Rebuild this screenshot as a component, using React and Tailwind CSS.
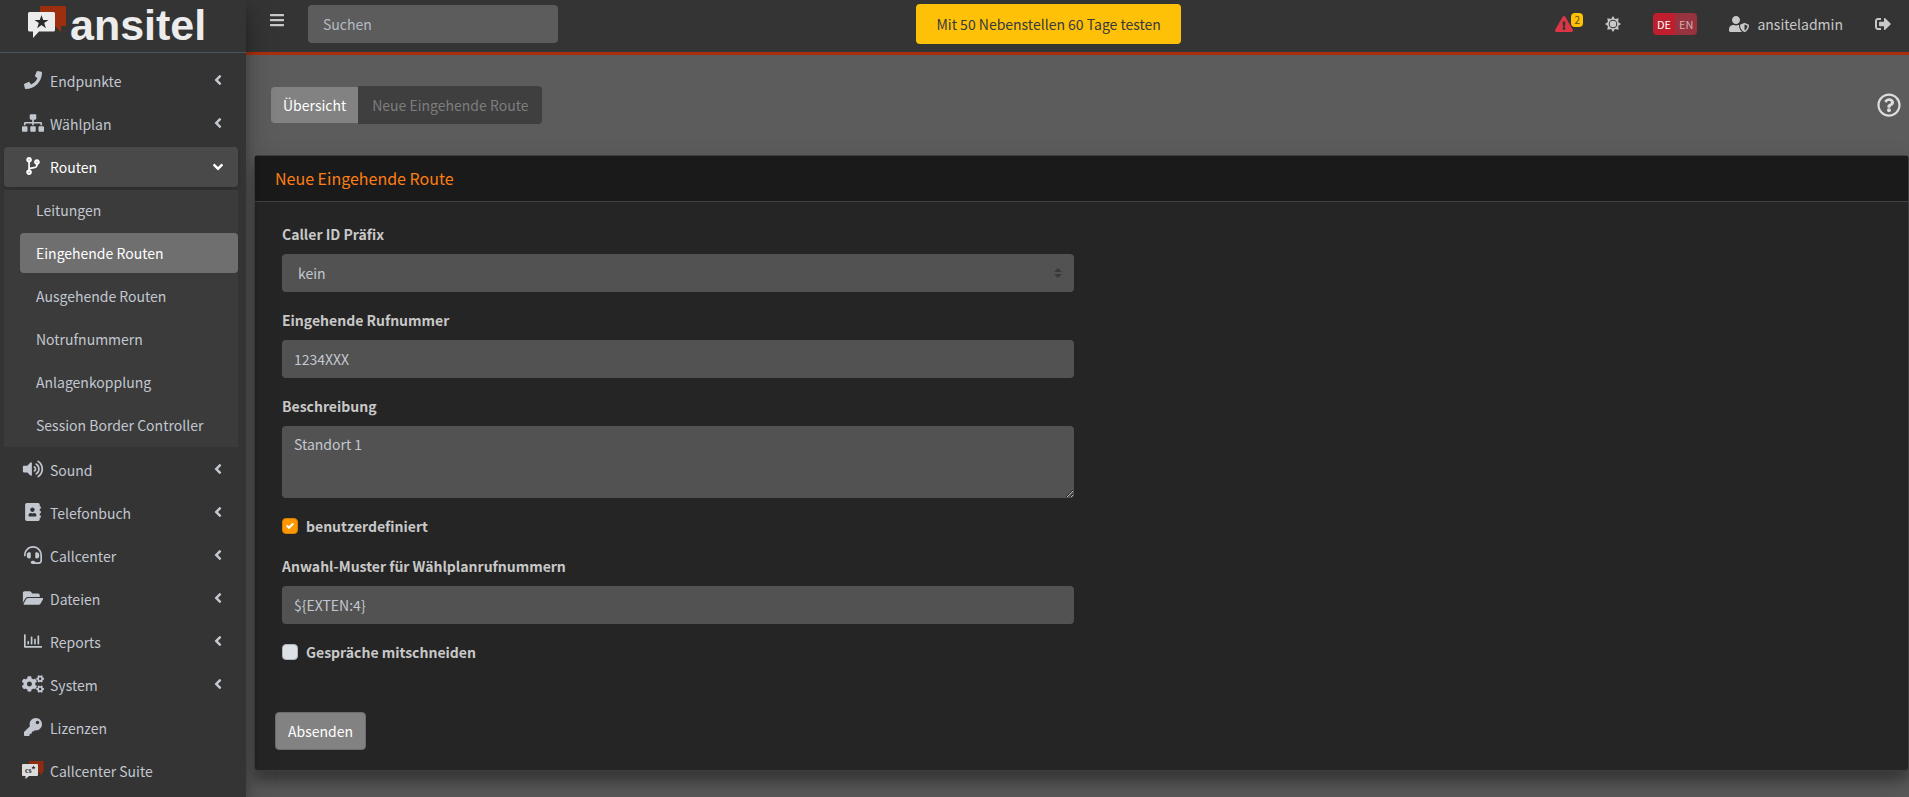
import React, { useState } from "react";
import {
  FaAddressBook,
  FaAngleDown,
  FaAngleLeft,
  FaBars,
  FaCodeBranch,
  FaCogs,
  FaExclamationTriangle,
  FaFolderOpen,
  FaHeadset,
  FaKey,
  FaPhone,
  FaRegChartBar,
  FaRegQuestionCircle,
  FaSignOutAlt,
  FaSitemap,
  FaUserShield,
  FaVolumeUp,
} from "react-icons/fa";

const fieldClass =
  "block w-full rounded bg-[#525252] px-3 text-sm leading-6 text-[#c2c7d0] outline-none";

// Two overlapping speech bubbles with a star
const BrandMark = ({ className }) => (
  <svg viewBox="0 0 38 32" className={className} aria-hidden="true">
    <path fill="#9c2f10" d="M13 0h24a1 1 0 0 1 1 1v18a1 1 0 0 1-1 1h-4v6l-6-6H12V1z" />
    <path fill="#ececec" d="M1.500 6h24a1.500 1.500 0 0 1 1.500 1.500V24a1.500 1.500 0 0 1-1.500 1.500H11L5 32v-6.500H1.500A1.500 1.500 0 0 1 0 24V7.500A1.500 1.500 0 0 1 1.500 6z" />
    <path fill="#2a2a2a" d="M13.500 9l1.700 5h5.300l-4.300 3.100 1.700 5.100-4.400-3.200-4.300 3.200 1.600-5.100L6.500 14h5.300z" />
  </svg>
);

const SuiteIcon = ({ className }) => (
  <svg viewBox="0 0 22 18" className={className}>
    <path fill="#8f2b10" d="M7 0h14.500v11h-1.500v3.500L16.500 11H7z" />
    <path fill="#dcdcdc" d="M1 3h14a1 1 0 0 1 1 1v10a1 1 0 0 1-1 1H7l-3.500 3v-3H1a1 1 0 0 1-1-1V4a1 1 0 0 1 1-1z" />
    <text x="3" y="12" fontSize="8" fontWeight="700" fill="#2a2a2a" fontFamily="Liberation Serif, serif">cs</text>
    <path fill="#2a2a2a" d="M11.500 4.500l.6 1.400h1.500l-1.200 1 .4 1.600-1.300-.9-1.300.9.400-1.600-1.200-1h1.500z" />
  </svg>
);

const SunIcon = () => (
  <svg viewBox="0 0 16 16" className="size-4" fill="currentColor">
    <path
      fillRule="evenodd"
      d="M8 0L9.900 2.900 13.660 2.340 13.100 6.100 16 8 13.100 9.900 13.660 13.660 9.900 13.100 8 16 6.100 13.100 2.340 13.660 2.900 9.900 0 8 2.900 6.100 2.340 2.340 6.100 2.900zM8 3.700a4.300 4.300 0 1 0 0 8.600 4.300 4.300 0 0 0 0-8.600z"
    />
    <circle cx="8" cy="8" r="3.300" />
  </svg>
);

const routes = [
  "Leitungen",
  "Eingehende Routen",
  "Ausgehende Routen",
  "Notrufnummern",
  "Anlagenkopplung",
  "Session Border Controller",
];

const menu = [
  { label: "Endpunkte", icon: FaPhone, hasChildren: true },
  { label: "Wählplan", icon: FaSitemap, hasChildren: true },
  { label: "Routen", icon: FaCodeBranch, children: routes },
  { label: "Sound", icon: FaVolumeUp, hasChildren: true },
  { label: "Telefonbuch", icon: FaAddressBook, hasChildren: true },
  { label: "Callcenter", icon: FaHeadset, hasChildren: true },
  { label: "Dateien", icon: FaFolderOpen, hasChildren: true },
  { label: "Reports", icon: FaRegChartBar, hasChildren: true },
  { label: "System", icon: FaCogs, hasChildren: true },
  { label: "Lizenzen", icon: FaKey },
  { label: "Callcenter Suite", icon: SuiteIcon },
];

const NavItem = ({ item }) => {
  const Icon = item.icon;
  const open = Boolean(item.children);

  return (
    <li>
      <a
        href="#"
        className={`flex h-10 items-center rounded px-3 ${
          open ? "bg-[#494949] text-white shadow-md" : "text-[#c2c7d0]"
        }`}
      >
        <span className="mb-0.5 flex w-[34px] justify-center">
          <Icon className="h-[18px] w-[22px]" />
        </span>
        <span className="flex-1">{item.label}</span>
        {item.hasChildren && <FaAngleLeft className="mb-0.5 size-4" />}
        {open && <FaAngleDown className="size-4" />}
      </a>
      {open && (
        <ul className="mt-[3px] flex flex-col gap-[3px] bg-[#3b3b3b] pb-0.5">
          {item.children.map((child) => (
            <li key={child} className="pl-4">
              <a
                href="#"
                className={`flex h-10 items-center rounded px-4 ${
                  child === "Eingehende Routen" ? "bg-[#6f6f6f] text-white" : "text-[#c2c7d0]"
                }`}
              >
                {child}
              </a>
            </li>
          ))}
        </ul>
      )}
    </li>
  );
};

const Sidebar = () => (
  <aside className="z-10 w-[246px] shrink-0 bg-[#343434] shadow-[0_14px_28px_rgba(0,0,0,0.25),0_10px_10px_rgba(0,0,0,0.22)]">
    <a href="#" className="flex h-[53px] items-start gap-1 border-b border-[#4b545c] pl-7">
      <BrandMark className="mt-1.5 h-8 w-[38px]" />
      <span className="font-['Liberation_Sans',sans-serif] text-[43px] leading-[50px] font-bold text-[#ececec]">ansitel</span>
    </a>
    <nav className="pt-2 pr-2 pl-1">
      <ul className="flex flex-col gap-[3px]">
        {menu.map((item) => (
          <NavItem key={item.label} item={item} />
        ))}
      </ul>
    </nav>
  </aside>
);

const Topbar = () => (
  <header className="flex h-[55px] items-start justify-between border-b-3 border-[#a92e0d] bg-[#343434] pr-[18px] text-[#c8c8c8]">
    <div className="flex items-start pl-[23px]">
      <button type="button" aria-label="Menü" className="mt-3">
        <FaBars className="size-4" />
      </button>
      <input
        type="search"
        aria-label="Suchen"
        placeholder="Suchen"
        className="mt-[5px] ml-[23px] h-[38px] w-[250px] rounded bg-[#5c5c5c] px-[15px] outline-none placeholder:text-[#b4bac4]"
      />
    </div>
    <button type="button" className="mt-1 h-10 rounded bg-[#ffc107] px-5 text-[#343a40]">
      Mit 50 Nebenstellen 60 Tage testen
    </button>
    <div className="flex h-12 items-center justify-end pl-4">
      <a href="#" aria-label="Warnungen" className="mr-[22px] flex items-center text-[#dc3545]">
        <FaExclamationTriangle className="h-4 w-[18px]" />
        <span className="mb-2 -ml-0.5 rounded bg-[#ffc107] px-[3px] text-[10px] leading-[14px] text-[#5c4c10]">2</span>
      </a>
      <button type="button" aria-label="Design" className="mr-8">
        <SunIcon />
      </button>
      <div className="mr-8 flex overflow-hidden rounded text-[11px] leading-[22px]">
        <button type="button" className="bg-[#be1e2d] px-1 text-white">DE</button>
        <button type="button" className="bg-[#96333e] px-1 text-[#d0b0b4]">EN</button>
      </div>
      <a href="#" className="mr-8 flex items-center gap-2">
        <FaUserShield className="h-4 w-5" />
        ansiteladmin
      </a>
      <a href="#" aria-label="Abmelden">
        <FaSignOutAlt className="size-4" />
      </a>
    </div>
  </header>
);

const Field = ({ id, label, children }) => (
  <div className="flex flex-col gap-2">
    <label htmlFor={id} className="leading-6 font-bold">{label}</label>
    {children}
  </div>
);

const Check = ({ id, label, checked, onChange }) => (
  <div className="flex items-center gap-2">
    <span className="relative flex size-4">
      <input
        id={id}
        type="checkbox"
        checked={checked}
        onChange={onChange}
        className="size-4 appearance-none rounded border border-[#adb5bd] bg-[#dee2e6] checked:border-[#d98200] checked:bg-[#ff9800]"
      />
      {checked && (
        <svg viewBox="0 0 8 8" className="pointer-events-none absolute top-1 left-1 size-2">
          <path fill="#fff" d="M6.560.750L2.970 4.350 1.440 2.820 0 4.260l2.970 2.990L8 2.190z" />
        </svg>
      )}
    </span>
    <label htmlFor={id} className="leading-6 font-bold">{label}</label>
  </div>
);

const RouteForm = () => {
  const [custom, setCustom] = useState(true);
  const [record, setRecord] = useState(false);

  return (
    <form className="ml-2 rounded border border-[#3c3f42] bg-[#252525] shadow-[0_14px_28px_rgba(0,0,0,0.25),0_10px_10px_rgba(0,0,0,0.22)]">
      <h3 className="border-b border-[#3f4347] bg-[#1a1a1a] px-5 py-[9px] text-base leading-[27px] text-[#fd7e14]">
        Neue Eingehende Route
      </h3>
      <div className="flex flex-col gap-4 pt-5 pr-2 pl-[27px] text-[#c8c8c8] lg:w-1/2">
        <Field id="prefix" label="Caller ID Präfix">
          <div className="relative">
            <select id="prefix" className={`${fieldClass} h-[38px] appearance-none pl-4`}>
              <option>kein</option>
            </select>
            <svg viewBox="0 0 4 5" className="pointer-events-none absolute top-3.5 right-3 h-2.5 w-2">
              <path fill="#343a40" d="M2 0L0 2h4zm0 5L0 3h4z" />
            </svg>
          </div>
        </Field>
        <Field id="number" label="Eingehende Rufnummer">
          <input id="number" type="text" defaultValue="1234XXX" className={`${fieldClass} h-[38px]`} />
        </Field>
        <Field id="description" label="Beschreibung">
          <textarea id="description" defaultValue="Standort 1" className={`${fieldClass} h-[72px] py-1.5`} />
        </Field>
        <Check id="custom" label="benutzerdefiniert" checked={custom} onChange={() => setCustom(!custom)} />
        <Field id="pattern" label="Anwahl-Muster für Wählplanrufnummern">
          <input id="pattern" type="text" defaultValue="${EXTEN:4}" className={`${fieldClass} h-[38px]`} />
        </Field>
        <Check id="record" label="Gespräche mitschneiden" checked={record} onChange={() => setRecord(!record)} />
      </div>
      <div className="px-5 pt-12 pb-5">
        <button type="submit" className="h-[38px] rounded-sm border border-[#6c6c6c] bg-[#828282] px-3 text-white">
          Absenden
        </button>
      </div>
    </form>
  );
};

export default function App() {
  return (
    <div className="flex h-screen overflow-hidden bg-[#5c5c5c] font-['Noto_Sans_CJK_JP',sans-serif] text-sm leading-6">
      <Sidebar />
      <div className="min-w-0 flex-1">
        <Topbar />
        <main>
          <div className="flex items-center justify-between py-[31px] pr-2 pl-[25px]">
            <div className="flex h-[38px] items-center">
              <a href="#" className="flex h-9 items-center rounded-l bg-[#828282] px-3 text-white">Übersicht</a>
              <span className="flex h-[38px] items-center rounded-r bg-[#3f3f3f] px-3.5 text-[#7d7d7d]">
                Neue Eingehende Route
              </span>
            </div>
            <button type="button" aria-label="Hilfe" className="text-[#dddddd]">
              <FaRegQuestionCircle className="size-6" />
            </button>
          </div>
          <RouteForm />
        </main>
      </div>
    </div>
  );
}
